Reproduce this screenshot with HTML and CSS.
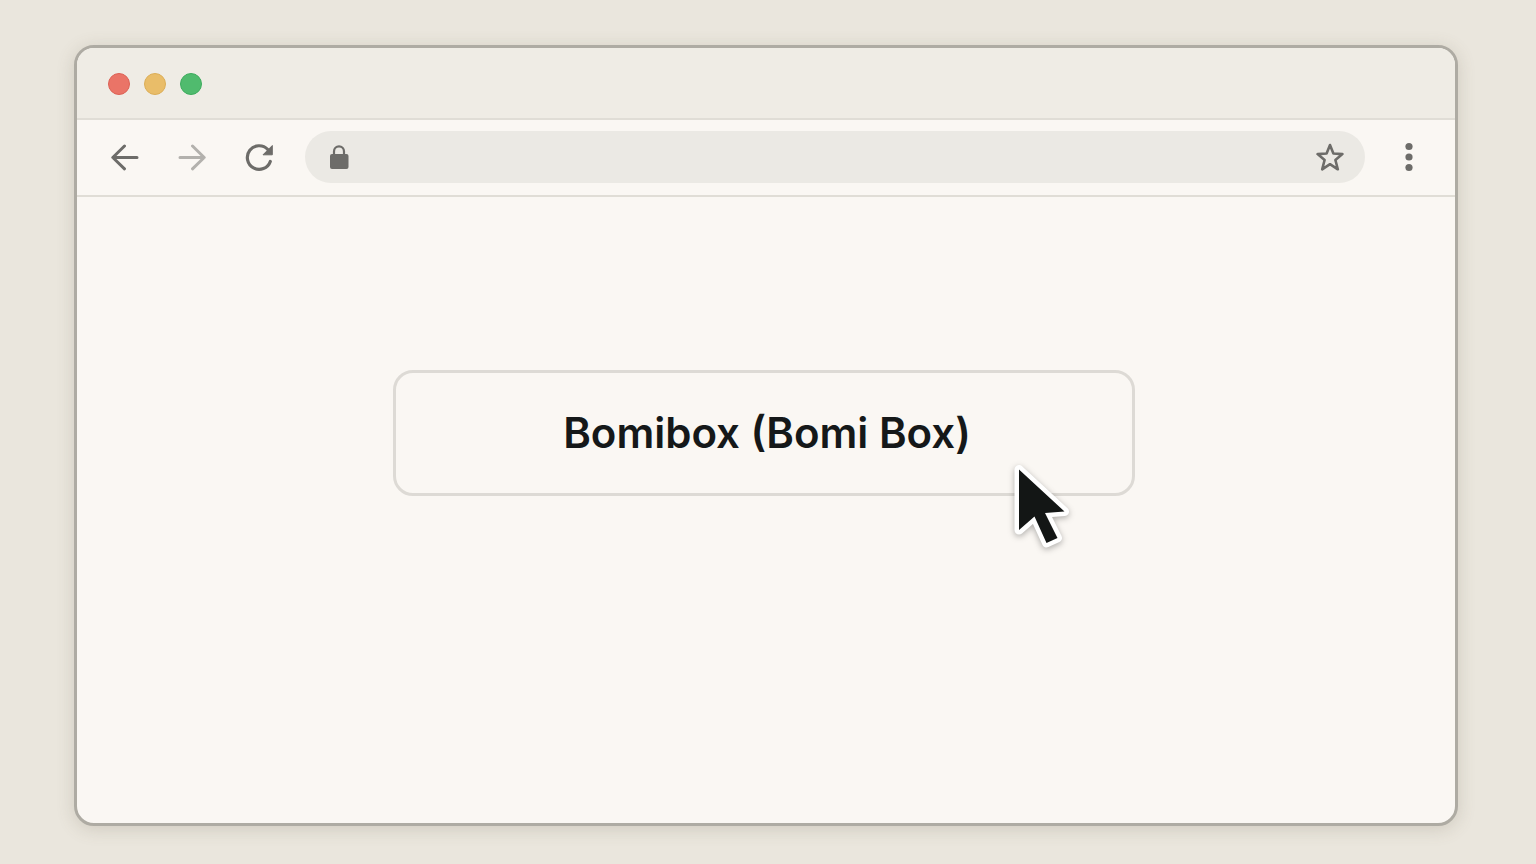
FILE: index.html
```html
<!DOCTYPE html>
<html lang="en">
<head>
    <meta charset="UTF-8">
    <meta name="viewport" content="width=device-width, initial-scale=1.0">
    <title>Bomibox (Bomi Box)</title>
    <link rel="stylesheet" href="styles.css">
</head>
<body>
    <div class="browser">
        <div class="title-bar">
            <span class="dot dot-red"></span>
            <span class="dot dot-yellow"></span>
            <span class="dot dot-green"></span>
        </div>

        <div class="toolbar">
            <div class="nav-buttons">
                <button type="button" class="icon-button" aria-label="Back">
                    <svg width="28" height="28" viewBox="0 0 28 28" fill="none" stroke="currentColor" stroke-width="3" stroke-linecap="round" stroke-linejoin="round">
                        <path d="M26 14.500H2M13.500 3L1.800 14.500l11.700 11.300"/>
                    </svg>
                </button>
                <button type="button" class="icon-button inactive" aria-label="Forward">
                    <svg width="28" height="28" viewBox="0 0 28 28" fill="none" stroke="currentColor" stroke-width="3" stroke-linecap="round" stroke-linejoin="round">
                        <path d="M2 14.500h24M14.500 3l11.700 11.500-11.700 11.300"/>
                    </svg>
                </button>
                <button type="button" class="icon-button" aria-label="Reload">
                    <svg width="28" height="28" viewBox="0 0 28 28" fill="none">
                        <path d="M22.800 6.500A11.800 11.800 0 1 0 25.300 18.400" stroke="currentColor" stroke-width="3.200" stroke-linecap="round"/>
                        <path d="M27.300 2.500v9.300H18z" fill="currentColor" stroke="currentColor" stroke-width="1" stroke-linejoin="round"/>
                    </svg>
                </button>
            </div>

            <div class="address-bar">
                <svg width="20" height="26" viewBox="0 0 20 26" fill="none">
                    <path d="M5 11V7.400a5 5 0 0 1 10 0V11" stroke="currentColor" stroke-width="2.200"/>
                    <rect x="1" y="10" width="18.500" height="15" rx="2" fill="currentColor"/>
                </svg>
                <input type="text" class="address-input" aria-label="Address">
                <button type="button" class="icon-button" aria-label="Bookmark">
                    <svg width="28" height="28" viewBox="0 0 28 28" fill="none" stroke="currentColor" stroke-width="2.600" stroke-linejoin="round">
                        <path d="M14 2l3.400 8.500 9 .600-7 5.900 2.400 9.300L14 21.200l-7.800 5.100L8.600 17l-7-5.900 9-.6z"/>
                    </svg>
                </button>
            </div>

            <button type="button" class="icon-button" aria-label="Menu">
                <svg width="24" height="30" viewBox="0 0 24 30" fill="currentColor">
                    <circle cx="12" cy="4.500" r="3.600"/>
                    <circle cx="12" cy="15" r="3.600"/>
                    <circle cx="12" cy="25.500" r="3.600"/>
                </svg>
            </button>
        </div>

        <main class="page">
            <div class="card">
                <button type="button" class="card-button">Bomibox (Bomi Box)</button>
                <svg class="cursor" width="60" height="90" viewBox="0 0 60 90">
                    <path d="M7 7.500v60.500l15.500-13.500 12 26.500 11-5-12.500-25 19.500-1.500z" fill="#fff" stroke="#fff" stroke-width="9" stroke-linejoin="round"/>
                    <path d="M7 7.500v60.500l15.500-13.500 12 26.500 11-5-12.500-25 19.500-1.500z" fill="#131615"/>
                </svg>
            </div>
        </main>
    </div>
</body>
</html>
```

FILE: styles.css
```css
:root {
    --desk-color: #eae6dd;
    --frame-color: #aeaba3;
    --bar-color: #efece5;
    --page-color: #faf7f3;
    --line-color: #e0ddd6;
    --icon-color: #6d6c69;
}

* {
    box-sizing: border-box;
}

body {
    font-family: Inter, "Liberation Sans", sans-serif;
    margin: 0;
    padding: 45px 78px 38px 74px;
    background-color: var(--desk-color);
    min-height: 100vh;
    display: flex;
}

.browser {
    flex: 1;
    display: flex;
    flex-direction: column;
    background-color: var(--page-color);
    border: 3px solid var(--frame-color);
    border-radius: 20px;
    box-shadow: 0 3px 18px rgba(100, 88, 70, 0.2);
    overflow: hidden;
}

.title-bar {
    display: flex;
    align-items: center;
    gap: 14px;
    padding: 25px 31px 23px;
    background-color: var(--bar-color);
    border-bottom: 2px solid var(--line-color);
}

.dot {
    width: 22px;
    height: 22px;
    border-radius: 50%;
    border: 1px solid;
}

.dot-red {
    background-color: #ea7467;
    border-color: #dd6155;
}

.dot-yellow {
    background-color: #e9bd69;
    border-color: #dcae57;
}

.dot-green {
    background-color: #50bb6e;
    border-color: #3dac5d;
}

.toolbar {
    display: flex;
    align-items: center;
    gap: 32px;
    padding: 11px 34px 12px;
    border-bottom: 2px solid var(--line-color);
}

.nav-buttons {
    display: flex;
    gap: 39px;
}

.icon-button {
    display: flex;
    padding: 0;
    border: none;
    background: none;
    color: var(--icon-color);
    cursor: pointer;
}

.inactive {
    color: #b3b1ad;
}

.address-bar {
    flex: 1;
    display: flex;
    align-items: center;
    gap: 16px;
    height: 52px;
    padding: 0 21px 0 24px;
    border-radius: 26px;
    background-color: #ebe9e4;
    color: var(--icon-color);
}

.address-input {
    flex: 1;
    min-width: 0;
    border: none;
    background: none;
    font-family: inherit;
    font-size: 20px;
    outline: none;
}

.page {
    flex: 1;
    display: flex;
    justify-content: center;
    align-items: flex-start;
    padding: 173px 24px 24px 20px;
}

.card {
    position: relative;
    width: 100%;
    max-width: 742px;
}

.card-button {
    width: 100%;
    padding: 35px 24px 35px 30px;
    border: 3px solid #dddad5;
    border-radius: 20px;
    background-color: var(--page-color);
    color: #151819;
    font-family: inherit;
    font-size: 42px;
    font-weight: 600;
    line-height: 50px;
    cursor: pointer;
}

/* pointer resting on the lower right edge of the card */
.cursor {
    position: absolute;
    right: 63px;
    top: 92px;
    filter: drop-shadow(0 2px 3px rgba(0, 0, 0, 0.3));
    pointer-events: none;
}
```
